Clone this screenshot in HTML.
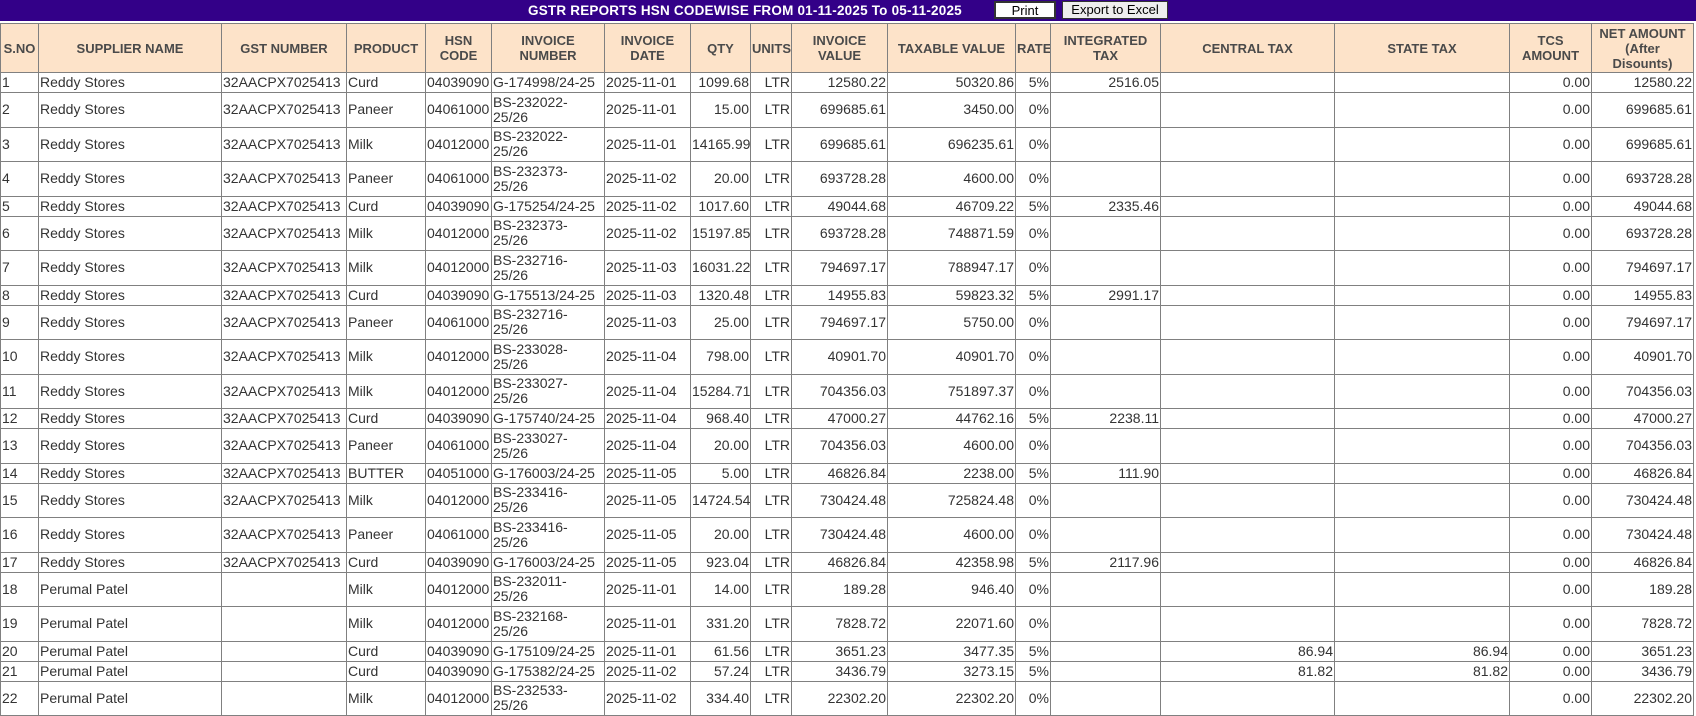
<!DOCTYPE html>
<html><head><meta charset="utf-8"><style>
body{margin:0;background:#fff;font-family:"Liberation Sans",Tahoma,sans-serif;}
.bar{position:absolute;left:0;top:0;width:1696px;height:21px;background:#330088;}
.ttl{position:absolute;left:528px;top:3px;color:#fff;font-weight:bold;font-size:13.5px;letter-spacing:0.2px;}
.btn{position:absolute;top:1px;height:18px;box-sizing:border-box;background:#fff;border:1px solid #333;font-size:13px;text-align:center;line-height:16px;color:#000}
table{position:absolute;left:0;top:23px;border-collapse:collapse;table-layout:fixed;width:1694px;font-size:14px;color:#333;}
td,th{border:1px solid #808080;padding:0 1px;overflow:hidden;white-space:nowrap;line-height:15px;}
th{background:#fde3c9;color:#4a4a4a;font-size:13px;height:48px;white-space:normal;line-height:15px;}
tr.s td{height:19px;}
tr.d td{height:33.5px;}
td.r{text-align:right}
</style></head><body>
<div class="bar"><span class="ttl">GSTR REPORTS HSN CODEWISE FROM 01-11-2025 To 05-11-2025</span>
<div class="btn" style="left:994px;width:62px;border-width:2px;">Print</div>
<div class="btn" style="left:1062px;width:106px;background:#eee;">Export to Excel</div></div>
<table>
<colgroup><col style="width:38px"><col style="width:183px"><col style="width:125px"><col style="width:79px"><col style="width:66px"><col style="width:113px"><col style="width:86px"><col style="width:60px"><col style="width:41px"><col style="width:96px"><col style="width:128px"><col style="width:35px"><col style="width:110px"><col style="width:174px"><col style="width:175px"><col style="width:82px"><col style="width:102px"></colgroup>
<tr><th>S.NO</th><th>SUPPLIER NAME</th><th>GST NUMBER</th><th>PRODUCT</th><th>HSN CODE</th><th>INVOICE NUMBER</th><th>INVOICE DATE</th><th>QTY</th><th>UNITS</th><th>INVOICE VALUE</th><th>TAXABLE VALUE</th><th>RATE</th><th>INTEGRATED TAX</th><th>CENTRAL TAX</th><th>STATE TAX</th><th>TCS AMOUNT</th><th>NET AMOUNT<br>(After<br>Disounts)</th></tr>
<tr class="s"><td>1</td><td>Reddy Stores</td><td>32AACPX7025413</td><td>Curd</td><td>04039090</td><td>G-174998/24-25</td><td>2025-11-01</td><td class="r">1099.68</td><td class="r">LTR</td><td class="r">12580.22</td><td class="r">50320.86</td><td class="r">5%</td><td class="r">2516.05</td><td></td><td></td><td class="r">0.00</td><td class="r">12580.22</td></tr>
<tr class="d"><td>2</td><td>Reddy Stores</td><td>32AACPX7025413</td><td>Paneer</td><td>04061000</td><td>BS-232022-<br>25/26</td><td>2025-11-01</td><td class="r">15.00</td><td class="r">LTR</td><td class="r">699685.61</td><td class="r">3450.00</td><td class="r">0%</td><td></td><td></td><td></td><td class="r">0.00</td><td class="r">699685.61</td></tr>
<tr class="d"><td>3</td><td>Reddy Stores</td><td>32AACPX7025413</td><td>Milk</td><td>04012000</td><td>BS-232022-<br>25/26</td><td>2025-11-01</td><td class="r">14165.99</td><td class="r">LTR</td><td class="r">699685.61</td><td class="r">696235.61</td><td class="r">0%</td><td></td><td></td><td></td><td class="r">0.00</td><td class="r">699685.61</td></tr>
<tr class="d"><td>4</td><td>Reddy Stores</td><td>32AACPX7025413</td><td>Paneer</td><td>04061000</td><td>BS-232373-<br>25/26</td><td>2025-11-02</td><td class="r">20.00</td><td class="r">LTR</td><td class="r">693728.28</td><td class="r">4600.00</td><td class="r">0%</td><td></td><td></td><td></td><td class="r">0.00</td><td class="r">693728.28</td></tr>
<tr class="s"><td>5</td><td>Reddy Stores</td><td>32AACPX7025413</td><td>Curd</td><td>04039090</td><td>G-175254/24-25</td><td>2025-11-02</td><td class="r">1017.60</td><td class="r">LTR</td><td class="r">49044.68</td><td class="r">46709.22</td><td class="r">5%</td><td class="r">2335.46</td><td></td><td></td><td class="r">0.00</td><td class="r">49044.68</td></tr>
<tr class="d"><td>6</td><td>Reddy Stores</td><td>32AACPX7025413</td><td>Milk</td><td>04012000</td><td>BS-232373-<br>25/26</td><td>2025-11-02</td><td class="r">15197.85</td><td class="r">LTR</td><td class="r">693728.28</td><td class="r">748871.59</td><td class="r">0%</td><td></td><td></td><td></td><td class="r">0.00</td><td class="r">693728.28</td></tr>
<tr class="d"><td>7</td><td>Reddy Stores</td><td>32AACPX7025413</td><td>Milk</td><td>04012000</td><td>BS-232716-<br>25/26</td><td>2025-11-03</td><td class="r">16031.22</td><td class="r">LTR</td><td class="r">794697.17</td><td class="r">788947.17</td><td class="r">0%</td><td></td><td></td><td></td><td class="r">0.00</td><td class="r">794697.17</td></tr>
<tr class="s"><td>8</td><td>Reddy Stores</td><td>32AACPX7025413</td><td>Curd</td><td>04039090</td><td>G-175513/24-25</td><td>2025-11-03</td><td class="r">1320.48</td><td class="r">LTR</td><td class="r">14955.83</td><td class="r">59823.32</td><td class="r">5%</td><td class="r">2991.17</td><td></td><td></td><td class="r">0.00</td><td class="r">14955.83</td></tr>
<tr class="d"><td>9</td><td>Reddy Stores</td><td>32AACPX7025413</td><td>Paneer</td><td>04061000</td><td>BS-232716-<br>25/26</td><td>2025-11-03</td><td class="r">25.00</td><td class="r">LTR</td><td class="r">794697.17</td><td class="r">5750.00</td><td class="r">0%</td><td></td><td></td><td></td><td class="r">0.00</td><td class="r">794697.17</td></tr>
<tr class="d"><td>10</td><td>Reddy Stores</td><td>32AACPX7025413</td><td>Milk</td><td>04012000</td><td>BS-233028-<br>25/26</td><td>2025-11-04</td><td class="r">798.00</td><td class="r">LTR</td><td class="r">40901.70</td><td class="r">40901.70</td><td class="r">0%</td><td></td><td></td><td></td><td class="r">0.00</td><td class="r">40901.70</td></tr>
<tr class="d"><td>11</td><td>Reddy Stores</td><td>32AACPX7025413</td><td>Milk</td><td>04012000</td><td>BS-233027-<br>25/26</td><td>2025-11-04</td><td class="r">15284.71</td><td class="r">LTR</td><td class="r">704356.03</td><td class="r">751897.37</td><td class="r">0%</td><td></td><td></td><td></td><td class="r">0.00</td><td class="r">704356.03</td></tr>
<tr class="s"><td>12</td><td>Reddy Stores</td><td>32AACPX7025413</td><td>Curd</td><td>04039090</td><td>G-175740/24-25</td><td>2025-11-04</td><td class="r">968.40</td><td class="r">LTR</td><td class="r">47000.27</td><td class="r">44762.16</td><td class="r">5%</td><td class="r">2238.11</td><td></td><td></td><td class="r">0.00</td><td class="r">47000.27</td></tr>
<tr class="d"><td>13</td><td>Reddy Stores</td><td>32AACPX7025413</td><td>Paneer</td><td>04061000</td><td>BS-233027-<br>25/26</td><td>2025-11-04</td><td class="r">20.00</td><td class="r">LTR</td><td class="r">704356.03</td><td class="r">4600.00</td><td class="r">0%</td><td></td><td></td><td></td><td class="r">0.00</td><td class="r">704356.03</td></tr>
<tr class="s"><td>14</td><td>Reddy Stores</td><td>32AACPX7025413</td><td>BUTTER</td><td>04051000</td><td>G-176003/24-25</td><td>2025-11-05</td><td class="r">5.00</td><td class="r">LTR</td><td class="r">46826.84</td><td class="r">2238.00</td><td class="r">5%</td><td class="r">111.90</td><td></td><td></td><td class="r">0.00</td><td class="r">46826.84</td></tr>
<tr class="d"><td>15</td><td>Reddy Stores</td><td>32AACPX7025413</td><td>Milk</td><td>04012000</td><td>BS-233416-<br>25/26</td><td>2025-11-05</td><td class="r">14724.54</td><td class="r">LTR</td><td class="r">730424.48</td><td class="r">725824.48</td><td class="r">0%</td><td></td><td></td><td></td><td class="r">0.00</td><td class="r">730424.48</td></tr>
<tr class="d"><td>16</td><td>Reddy Stores</td><td>32AACPX7025413</td><td>Paneer</td><td>04061000</td><td>BS-233416-<br>25/26</td><td>2025-11-05</td><td class="r">20.00</td><td class="r">LTR</td><td class="r">730424.48</td><td class="r">4600.00</td><td class="r">0%</td><td></td><td></td><td></td><td class="r">0.00</td><td class="r">730424.48</td></tr>
<tr class="s"><td>17</td><td>Reddy Stores</td><td>32AACPX7025413</td><td>Curd</td><td>04039090</td><td>G-176003/24-25</td><td>2025-11-05</td><td class="r">923.04</td><td class="r">LTR</td><td class="r">46826.84</td><td class="r">42358.98</td><td class="r">5%</td><td class="r">2117.96</td><td></td><td></td><td class="r">0.00</td><td class="r">46826.84</td></tr>
<tr class="d"><td>18</td><td>Perumal Patel</td><td></td><td>Milk</td><td>04012000</td><td>BS-232011-<br>25/26</td><td>2025-11-01</td><td class="r">14.00</td><td class="r">LTR</td><td class="r">189.28</td><td class="r">946.40</td><td class="r">0%</td><td></td><td></td><td></td><td class="r">0.00</td><td class="r">189.28</td></tr>
<tr class="d"><td>19</td><td>Perumal Patel</td><td></td><td>Milk</td><td>04012000</td><td>BS-232168-<br>25/26</td><td>2025-11-01</td><td class="r">331.20</td><td class="r">LTR</td><td class="r">7828.72</td><td class="r">22071.60</td><td class="r">0%</td><td></td><td></td><td></td><td class="r">0.00</td><td class="r">7828.72</td></tr>
<tr class="s"><td>20</td><td>Perumal Patel</td><td></td><td>Curd</td><td>04039090</td><td>G-175109/24-25</td><td>2025-11-01</td><td class="r">61.56</td><td class="r">LTR</td><td class="r">3651.23</td><td class="r">3477.35</td><td class="r">5%</td><td></td><td class="r">86.94</td><td class="r">86.94</td><td class="r">0.00</td><td class="r">3651.23</td></tr>
<tr class="s"><td>21</td><td>Perumal Patel</td><td></td><td>Curd</td><td>04039090</td><td>G-175382/24-25</td><td>2025-11-02</td><td class="r">57.24</td><td class="r">LTR</td><td class="r">3436.79</td><td class="r">3273.15</td><td class="r">5%</td><td></td><td class="r">81.82</td><td class="r">81.82</td><td class="r">0.00</td><td class="r">3436.79</td></tr>
<tr class="d"><td>22</td><td>Perumal Patel</td><td></td><td>Milk</td><td>04012000</td><td>BS-232533-<br>25/26</td><td>2025-11-02</td><td class="r">334.40</td><td class="r">LTR</td><td class="r">22302.20</td><td class="r">22302.20</td><td class="r">0%</td><td></td><td></td><td></td><td class="r">0.00</td><td class="r">22302.20</td></tr>
</table>
</body></html>
